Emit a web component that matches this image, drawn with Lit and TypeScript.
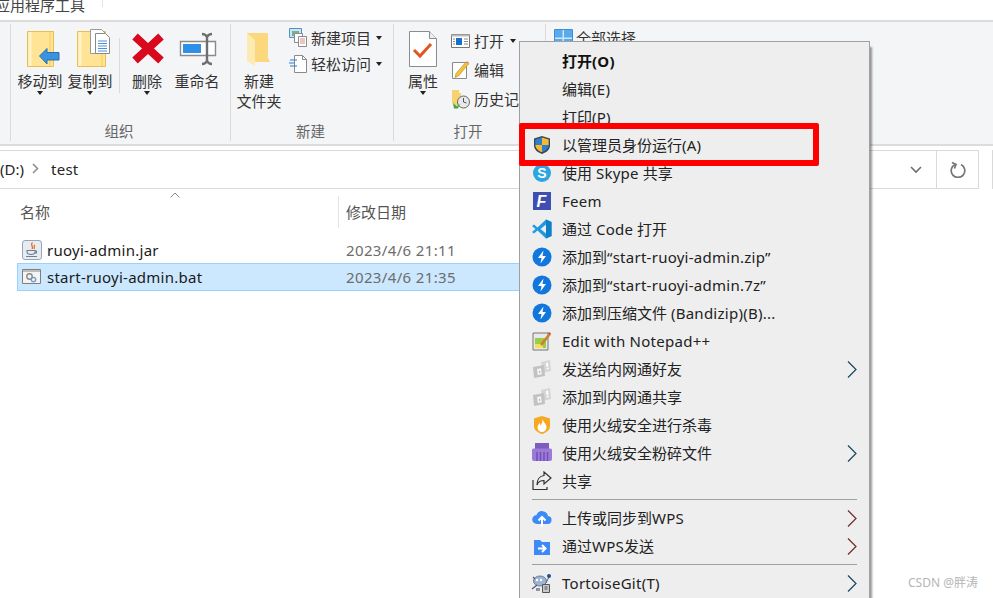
import { LitElement, css, html, svg } from 'lit'
import { customElement } from 'lit/decorators.js'

const icon = (w: number, h: number, body: unknown) =>
  html`<svg width="${w}" height="${h}" viewBox="0 0 ${w} ${h}">${body}</svg>`

/* ribbon icons */
const folderBack = (w: number) =>
  svg`<path d="M.5.500h${w}v35H.5z" fill="#ffe496" stroke="#e8bf55"/><path d="M3 1v34" stroke="#fff3c8" stroke-width="3"/><path d="M${w - 3} 1v34" stroke="#fbd777" stroke-width="2"/>`
const moveIcon = icon(40, 40, svg`<g transform="translate(7 2)">${folderBack(26)}<path d="M12.500 25L20 17.500v4h12v7.500H20v4z" fill="#3b93e0" stroke="#2b6fb0"/></g>`)
const copyIcon = icon(40, 40, svg`<g transform="translate(7 2)">${folderBack(28)}
  <path d="M13.500-1.500h11l4 4v20h-15z" fill="#fff" stroke="#9a9a9a"/>
  <path d="M18.500 2.500h10l4 4v16h-14z" fill="#fff" stroke="#8a8a8a"/>
  <path d="M21 10h9M21 12.500h9M21 15h9M21 17.500h9M21 20h9" stroke="#4a90e2"/></g>`)
const deleteIcon = icon(40, 40, svg`<path d="M8 7.500L34 31.500M34 7.500L8 31.500" stroke="#d8091c" stroke-width="8"/>`)
const renameIcon = icon(40, 40, svg`<path d="M3.500 12.500h35v14h-35z" fill="#fff" stroke="#8a8a8a" stroke-width="1.400"/><path d="M6 15h18v9H6z" fill="#2f8fe6"/>
  <path d="M25 5c3 0 4 1 5 3 1-2 2-3 5-3M25 35c3 0 4-1 5-3 1 2 2 3 5 3M30 8v24" fill="none" stroke="#6e6e6e" stroke-width="2.400"/>`)
const newFolderIcon = icon(40, 40, svg`<path d="M8 4h21v25l2 4H16l-8-4z" fill="#fbd77e"/><path d="M8 4l8 7v26l-8-5z" fill="#fdeab0"/>`)
const propsIcon = icon(40, 40, svg`<path d="M6.500 2.500h20l7 7v28h-27z" fill="#fff" stroke="#8c8c8c"/><path d="M26.500 2.500v7h7" fill="#eee" stroke="#8c8c8c"/><path d="M11 21l6 6 11-12" fill="none" stroke="#e2561f" stroke-width="3"/>`)

const newItemIcon = icon(19, 20, svg`<path d="M.5.500h12v9H.5z" fill="#cfe3f2" stroke="#4f93c8"/><path d="M3 3h7v5H3z" fill="#7fae8a"/><path d="M5.500 5.500h8v9h-8z" fill="#fff" stroke="#8a8a8a"/><path d="M9.500 8.500h8v10h-8z" fill="#fff" stroke="#8a8a8a"/><path d="M11 11h5M11 13h5M11 15h5" stroke="#d38b8b"/>`)
const easyIcon = icon(19, 20, svg`<path d="M5.500 1.500h8l4 4v13h-12z" fill="#fff" stroke="#8a8a8a"/><path d="M13.500 1.500v4h4" fill="none" stroke="#8a8a8a"/><path d="M1 6h7M0 9h5M1 12h7" stroke="#2a7fd0" stroke-width="1.200"/>`)
const openIcon = icon(19, 16, svg`<path d="M.5 1.500h18v13H.5z" fill="#fff" stroke="#777"/><path d="M.5 1.500h18v2H.5z" fill="#bbb"/><path d="M5 5h6v7H5z" fill="#1570d0"/><path d="M13 6h4M13 8.500h4M13 11h4M2 6h2M2 8.500h2M2 11h2" stroke="#888"/>`)
const editIcon = icon(19, 20, svg`<path d="M1.500 2.500h14v16h-14z" fill="#fff" stroke="#8a8a8a"/><path d="M5 13.500L15 2l2.500 2L7.500 16l-3.500 1.500z" fill="#f2c23c" stroke="#b98a20" stroke-width=".6"/><path d="M15.500 1.500l2.500 2" stroke="#e08a8a" stroke-width="1.500"/>`)
const historyIcon = icon(19, 20, svg`<path d="M1 1h7v3h2v13H5l-4-3z" fill="#f7d36d"/><circle cx="12.500" cy="13" r="6" fill="#e8e8e8" stroke="#666"/><path d="M12.500 9v4l3 1" fill="none" stroke="#555"/><path d="M2 14l4 3.500 3-3-2 5H3z" fill="#3aa648"/>`)
const selectIcon = icon(19, 18, svg`<path d="M.5.500h18v17H.5z" fill="#cfe6fa" stroke="#3a8fd8"/><path d="M1 1h7.500v7.500H1zM10 1h8v7.500h-8zM1 10h7.500v7H1zM10 10h8v7h-8z" fill="#5aa9ea"/>`)

/* context menu icons */
const shield = icon(20, 20, svg`<path d="M10 1l8 2.500v7c0 4-3.500 7-8 8.500-4.500-1.500-8-4.500-8-8.500v-7z" fill="#3a4656"/>
  <path d="M10 2.500L3.300 4.500V10H10z" fill="#2f7fd0"/><path d="M10 2.500l6.700 2V10H10z" fill="#f7b92d"/><path d="M3.300 10c.2 3.400 3 5.800 6.700 7.300V10z" fill="#f7b92d"/><path d="M16.700 10c-.2 3.400-3 5.800-6.700 7.300V10z" fill="#2f7fd0"/>`)
const skype = icon(20, 20, svg`<circle cx="10" cy="10" r="9" fill="#2ba6e1"/><text x="10" y="15" text-anchor="middle" font-family="Liberation Sans" font-weight="700" font-size="14" fill="#fff">S</text>`)
const feem = icon(20, 20, svg`<path d="M1 1h18v18H1z" fill="#3f4fb0"/><text x="9.500" y="16" text-anchor="middle" font-family="Liberation Sans" font-weight="700" font-style="italic" font-size="16" fill="#fff">F</text>`)
const vscode = icon(20, 20, svg`<path d="M14 .5L19.500 3v14L14 19.500 5.500 11.500 2 14.500 0 13l3.500-3L0 7l2-1.500 3.500 3zM14 5.500L8.500 10l5.500 4.500z" fill="#1f9ae0"/><path d="M14 .5L19.500 3v14L14 19.500V14.500L14 5.500z" fill="#0f7fc8"/>`)
const bandizip = icon(20, 20, svg`<circle cx="10" cy="10" r="9.500" fill="#1277dd"/><path d="M11.500 3.500L6 11h3.500l-1 5.500L14 9h-3.500z" fill="#fff"/>`)
const notepad = icon(20, 20, svg`<path d="M1 2h15v17H1z" fill="#e8e8e8" stroke="#777"/><path d="M3 7h11v10H3z" fill="#9ccc4a"/><path d="M3 13h8v4H3z" fill="#f0e05a"/><path d="M8 13L17 2l2 1.500L10 15z" fill="#c8862a"/><path d="M17 1l2 1.500-1 1-2-1.500z" fill="#d33"/>`)
const lanIcon = icon(20, 20, svg`<path d="M9 3l9-2 1 11-9 2z" fill="#d6d6d6"/><path d="M1 8l11-2 1 11-11 2z" fill="#c2c2c2"/><path d="M5 10l4-.7.8 6-4 .7z" fill="#f4f4f4"/><path d="M7 12l1-.2.3 2-1 .2z" fill="#b0b0b0"/><path d="M14 4l2-.4.4 4-2 .4zM14.600 9l2-.4.2 1.400-2 .4z" fill="#fff"/>`)
const huorong = icon(20, 20, svg`<path d="M10 1l8 2.500V11c0 4-3.500 6.500-8 8-4.500-1.500-8-4-8-8V3.500z" fill="#f7a823"/><path d="M10.500 4c.5 3 4 4.500 4 8.500 0 2.500-2 4.500-4.500 4.500S5.500 15 5.500 12.500c0-2 1.500-3 2-4.500.7.7 1 1.500 1 2.500 1.500-1.500 2-4 2-6.500z" fill="#fff"/>`)
const shredder = icon(20, 20, svg`<path d="M3 0h14v7H3z" fill="#7d5cc0"/><path d="M0 7q0-1.500 1.500-1.500h17Q20 5.500 20 7v9q0 2-2 2H2q-2 0-2-2z" fill="#9b7ad8"/><path d="M5 9v9M8.500 9v9M12 9v9M15.500 9v9" stroke="#6f4fb5" stroke-width="1.400"/>`)
const share = icon(20, 20, svg`<path d="M1 9v9.500h14V16" fill="none" stroke="#333" stroke-width="1.200"/><path d="M12 1l7 6-7 6V9.500C8 9.500 6 11 5 14c0-5 2.500-9 7-9.500z" fill="none" stroke="#333" stroke-width="1.200"/>`)
const wpsCloud = icon(20, 20, svg`<path d="M5 16a4.500 4.500 0 0 1-.5-9A6 6 0 0 1 16 8a4 4 0 0 1-1 8z" fill="#3d8af7"/><path d="M10 19v-9M6.500 12.500L10 9l3.500 3.500" fill="none" stroke="#fff" stroke-width="2"/>`)
const wpsFolder = icon(20, 20, svg`<path d="M2 4h6l2 2h8v13H2z" fill="#3d8af7"/><path d="M6 12.500h7M10 9l3.500 3.500L10 16" fill="none" stroke="#fff" stroke-width="2"/>`)
const tortoise = icon(22, 20, svg`<ellipse cx="9" cy="8" rx="6.500" ry="5" fill="#9db4d6" stroke="#6a7c98"/><circle cx="6" cy="7" r="1.200" fill="#fff"/><circle cx="10" cy="7" r="1.200" fill="#fff"/><path d="M1 16l5-4M2 4l2 2M14 11l3 2" stroke="#556" stroke-width="1.200"/><path d="M5 15h4v3H5z" fill="#8a96a8"/><path d="M11.500 11.500h7v8h-7z" fill="#c9c9c9" stroke="#555"/><path d="M13.500 14h3M13.500 16h3" stroke="#555"/><path d="M15 10l3-6" stroke="#667" /><circle cx="18" cy="3" r="2" fill="#1f4f96"/>`)

/* file icons */
const jarIcon = icon(20, 20, svg`<rect x=".5" y=".5" width="19" height="19" rx="2.500" fill="#e6ecf2" stroke="#93a6ba"/><path d="M10.500 2.500c-3 2.500 1.500 3.500-.5 6.500M13 5c-2 1 0 2-1 4" fill="none" stroke="#e07020" stroke-width="1.300"/><path d="M5 10.500h8v1.500c0 2-1.500 2.500-4 2.500S5 14 5 12zM13 11h1.500v2H13M4 16.500h11" fill="none" stroke="#6f7f90" stroke-width="1.100"/>`)
const batIcon = icon(20, 16, svg`<path d="M.5.500h18v14H.5z" fill="#f4f4f4" stroke="#7f7f7f"/><path d="M1 1h17v2H1z" fill="#bdbdbd"/><circle cx="7.500" cy="7.500" r="2.700" fill="none" stroke="#8a8a8a" stroke-width="1.400"/><circle cx="11.500" cy="10.500" r="2.200" fill="none" stroke="#6f9cc8" stroke-width="1.300"/>`)

// latin runs come out a bit narrow in Noto Sans, so they get their own spacing
const spaced = (text: string) =>
  text.split(/([\x21-\x7e“”]+(?: [\x21-\x7e“”]+)*)/).map((part, i) => (i % 2 ? html`<span class="lat">${part}</span>` : part))

type MenuEntry = { label?: string; ic?: unknown; sub?: boolean; warm?: boolean; bold?: boolean }

const menu: MenuEntry[] = [
  { label: '打开(O)', bold: true },
  { label: '编辑(E)' },
  { label: '打印(P)' },
  { label: '以管理员身份运行(A)', ic: shield },
  { label: '使用 Skype 共享', ic: skype },
  { label: 'Feem', ic: feem },
  { label: '通过 Code 打开', ic: vscode },
  { label: '添加到“start-ruoyi-admin.zip”', ic: bandizip },
  { label: '添加到“start-ruoyi-admin.7z”', ic: bandizip },
  { label: '添加到压缩文件 (Bandizip)(B)...', ic: bandizip },
  { label: 'Edit with Notepad++', ic: notepad },
  { label: '发送给内网通好友', ic: lanIcon, sub: true },
  { label: '添加到内网通共享', ic: lanIcon },
  { label: '使用火绒安全进行杀毒', ic: huorong },
  { label: '使用火绒安全粉碎文件', ic: shredder, sub: true },
  { label: '共享', ic: share },
  {},
  { label: '上传或同步到WPS', ic: wpsCloud, sub: true, warm: true },
  { label: '通过WPS发送', ic: wpsFolder, sub: true, warm: true },
  {},
  { label: 'TortoiseGit(T)', ic: tortoise, sub: true },
]

@customElement('app-root')
export class AppRoot extends LitElement {
  static styles = css`
    :host {
      display: block;
      position: relative;
      width: 993px;
      height: 598px;
      overflow: hidden;
      background: #fff;
      color: #262626;
      font: 15px/20px 'Noto Sans', 'Noto Sans CJK SC', sans-serif;
    }
    .lat { letter-spacing: 0.26px; }

    /* tab strip, cut by the top of the picture */
    .tabs {
      height: 20px;
      display: flex;
      overflow: hidden;
    }
    .tab {
      margin: -5px 0 0 -5px;
      padding-right: 17px;
      height: 12px;
      border-right: 1px solid #e3e3e3;
      white-space: nowrap;
      line-height: 20px;
      color: #444;
    }

    /* ribbon */
    .ribbon {
      height: 117px;
      padding: 2px 0 3px 10px;
      display: flex;
      background: #f4f5f7;
      border-top: 2px solid #dcdcdc;
      border-bottom: 2px solid #dcdcdc;
    }
    .group {
      display: flex;
      flex-direction: column;
      align-items: stretch;
      border-left: 1px solid #d9dadc;
    }
    .group.organize { width: 219px; }
    .group.create { width: 162px; }
    .group.open { width: 151px; }
    .group.select { width: 200px; }
    .tools {
      flex: 1;
      display: flex;
      padding-top: 5px;
    }
    .organize .tools { padding-left: 4px; }
    .create .tools { padding-left: 3px; }
    .open .tools { padding-left: 4px; }
    .group-name {
      height: 20px;
      padding-right: 3px;
      text-align: center;
      color: #666;
      font-size: 14.500px;
    }
    .big {
      width: 50px;
      display: flex;
      flex-direction: column;
      align-items: center;
      text-align: center;
      white-space: nowrap;
      color: #333;
    }
    .big svg { margin-bottom: 3px; display: block; }
    .big > div:nth-child(2) { margin-top: -1px; }
    .caret {
      width: 0;
      height: 0;
      margin-top: 0;
      border: 3.500px solid transparent;
      border-top: 4px solid #222;
      border-bottom: 0;
    }
    .tool-sep {
      width: 1px;
      height: 55px;
      margin: 9px 2px 0 4px;
      background: #d9dadc;
    }
    .small-col {
      display: flex;
      flex-direction: column;
      margin-left: 5px;
    }
    .create .small-col { margin-top: -4px; }
    .open .small-col { margin-top: -3px; margin-left: 3px; }
    .small {
      height: 26px;
      display: flex;
      align-items: center;
      gap: 3px;
      white-space: nowrap;
      color: #333;
    }
    .open .small { height: 29px; gap: 4px; }
    .small .caret { margin: 0 0 0 2px; }
    .select .small { margin: -4px 0 0 8px; }

    /* address bar */
    .address {
      display: flex;
      height: 39px;
      margin-top: 4px;
    }
    .crumbs {
      flex: 0 0 936px;
      display: flex;
      align-items: center;
      border: solid #d9d9d9;
      border-width: 1px 0;
      white-space: nowrap;
    }
    .crumbs .path { flex: 1; display: flex; align-items: center; margin-top: -2px; }
    .crumbs .chev { margin: 0 12px 0 7px; }
    .drop { margin-right: 14px; }
    .refresh {
      flex: 0 0 41px;
      display: flex;
      align-items: center;
      justify-content: center;
      border: 1px solid #d9d9d9;
    }
    .search {
      flex: 1;
      margin-left: 13px;
      border: 1px solid #d9d9d9;
      border-right: 0;
    }

    /* file list */
    .list-head {
      display: flex;
      height: 32px;
      margin: 7px 0 8px 17px;
      width: 600px;
      color: #555;
      align-items: center;
    }
    .col-name {
      position: relative;
      width: 321px;
      padding-left: 3px;
      box-sizing: border-box;
    }
    .col-date {
      height: 32px;
      line-height: 32px;
      padding-left: 7px;
      border-left: 1px solid #e3e3e3;
    }
    .sort {
      position: absolute;
      left: 153px;
      top: -10px;
    }
    .row {
      display: flex;
      align-items: center;
      width: 680px;
      height: 26px;
      margin-left: 17px;
      border: 1px solid transparent;
      white-space: nowrap;
      color: #1a1a1a;
    }
    .row.on {
      margin-top: -1px;
      background: #cce8ff;
      border-color: #99d1ff;
    }
    .row .name {
      width: 321px;
      display: flex;
      align-items: center;
      gap: 5px;
      padding-left: 4px;
      box-sizing: border-box;
    }
    .row .date { color: #6d6d6d; padding-left: 7px; letter-spacing: 0.36px; }

    /* context menu */
    .menu {
      position: absolute;
      left: 519px;
      top: 41px;
      width: 351px;
      height: 600px;
      box-sizing: border-box;
      padding-top: 5px;
      background: #eeeeee;
      border: 1px solid #a0a0a0;
      box-shadow: 3px 5px 2px -1px rgba(0, 0, 0, 0.4);
    }
    .item {
      display: flex;
      align-items: center;
      height: 28px;
      color: #222;
      white-space: nowrap;
    }
    .item .ic {
      width: 42px;
      display: flex;
      justify-content: center;
      padding-left: 1px;
      box-sizing: border-box;
    }
    .item .txt { flex: 1; }
    .item.bold .txt { font-weight: 700; color: #111; }
    .item .arrow { margin-right: 12px; display: block; }
    .arrow path { fill: none; stroke: #17475f; stroke-width: 1.200; }
    .warm .arrow path { stroke: #6e2a2a; }
    .menu-sep {
      height: 1px;
      margin: 4px 12px 4px 12px;
      background: #a0a0a0;
    }
    .highlight {
      position: absolute;
      left: -1px;
      top: 81px;
      width: 300px;
      height: 43px;
      box-sizing: border-box;
      border: 6px solid #ff0000;
      border-radius: 2px;
    }
    .mark {
      position: absolute;
      right: 15px;
      bottom: 5px;
      font-size: 12px;
      line-height: 20px;
      color: #b5b5b5;
    }
  `

  private big(label: unknown, ic: unknown, caret = true) {
    return html`<div class="big">${ic}<div>${label}</div>${caret ? html`<div class="caret"></div>` : ''}</div>`
  }

  private small(label: string, ic: unknown, caret = false) {
    return html`<div class="small">${ic}<span>${label}</span>${caret ? html`<div class="caret"></div>` : ''}</div>`
  }

  private renderRibbon() {
    return html`<div class="ribbon">
      <div class="group organize">
        <div class="tools">
          ${this.big('移动到', moveIcon)} ${this.big('复制到', copyIcon)}
          <div class="tool-sep"></div>
          ${this.big('删除', deleteIcon)} ${this.big('重命名', renameIcon, false)}
        </div>
        <div class="group-name">组织</div>
      </div>
      <div class="group create">
        <div class="tools">
          ${this.big(html`新建<br />文件夹`, newFolderIcon, false)}
          <div class="small-col">
            ${this.small('新建项目', newItemIcon, true)} ${this.small('轻松访问', easyIcon, true)}
          </div>
        </div>
        <div class="group-name">新建</div>
      </div>
      <div class="group open">
        <div class="tools">
          ${this.big('属性', propsIcon)}
          <div class="small-col">
            ${this.small('打开', openIcon, true)} ${this.small('编辑', editIcon)} ${this.small('历史记录', historyIcon)}
          </div>
        </div>
        <div class="group-name">打开</div>
      </div>
      <div class="group select">
        <div class="tools">${this.small('全部选择', selectIcon)}</div>
      </div>
    </div>`
  }

  private renderMenu() {
    return html`<div class="menu">
      ${menu.map((m) =>
        m.label
          ? html`<div class="item ${m.bold ? 'bold' : ''} ${m.warm ? 'warm' : ''}">
              <div class="ic">${m.ic ?? ''}</div>
              <div class="txt">${spaced(m.label)}</div>
              ${m.sub
                ? html`<svg class="arrow" width="10" height="17" viewBox="0 0 10 17"><path d="M1 .5l8 8-8 8" /></svg>`
                : ''}
            </div>`
          : html`<div class="menu-sep"></div>`,
      )}
      <div class="highlight"></div>
    </div>`
  }

  render() {
    return html`
      <div class="tabs"><div class="tab">应用程序工具</div></div>
      ${this.renderRibbon()}
      <div class="address">
        <div class="crumbs">
          <div class="path">
            <span>(D:)</span>
            <svg class="chev" width="8" height="11" viewBox="0 0 8 11"><path d="M2 1l4.500 4.500L2 10" fill="none" stroke="#8a8a8a" stroke-width="1.500" /></svg>
            <span class="lat">test</span>
          </div>
          <svg class="drop" width="12" height="8" viewBox="0 0 12 8"><path d="M1 1l5 5 5-5" fill="none" stroke="#6f6f6f" stroke-width="1.600" /></svg>
        </div>
        <div class="refresh">
          <svg width="16" height="17" viewBox="0 0 16 17"><path d="M5 3.500a6.800 6.800 0 1 0 6 0" fill="none" stroke="#777" stroke-width="1.700" /><path d="M2 1.500l4 2-1.500 4" fill="none" stroke="#777" stroke-width="1.700" /></svg>
        </div>
        <div class="search"></div>
      </div>
      <div class="list-head">
        <div class="col-name">
          名称
          <svg class="sort" width="10" height="6" viewBox="0 0 10 6"><path d="M.5 5.500L5 1l4.500 4.500" fill="none" stroke="#8a8a8a" /></svg>
        </div>
        <div class="col-date">修改日期</div>
      </div>
      <div class="row">
        <div class="name">${jarIcon}<span class="lat">ruoyi-admin.jar</span></div>
        <div class="date">2023/4/6 21:11</div>
      </div>
      <div class="row on">
        <div class="name">${batIcon}<span class="lat">start-ruoyi-admin.bat</span></div>
        <div class="date">2023/4/6 21:35</div>
      </div>
      ${this.renderMenu()}
      <div class="mark">CSDN @胖涛</div>
    `
  }
}
